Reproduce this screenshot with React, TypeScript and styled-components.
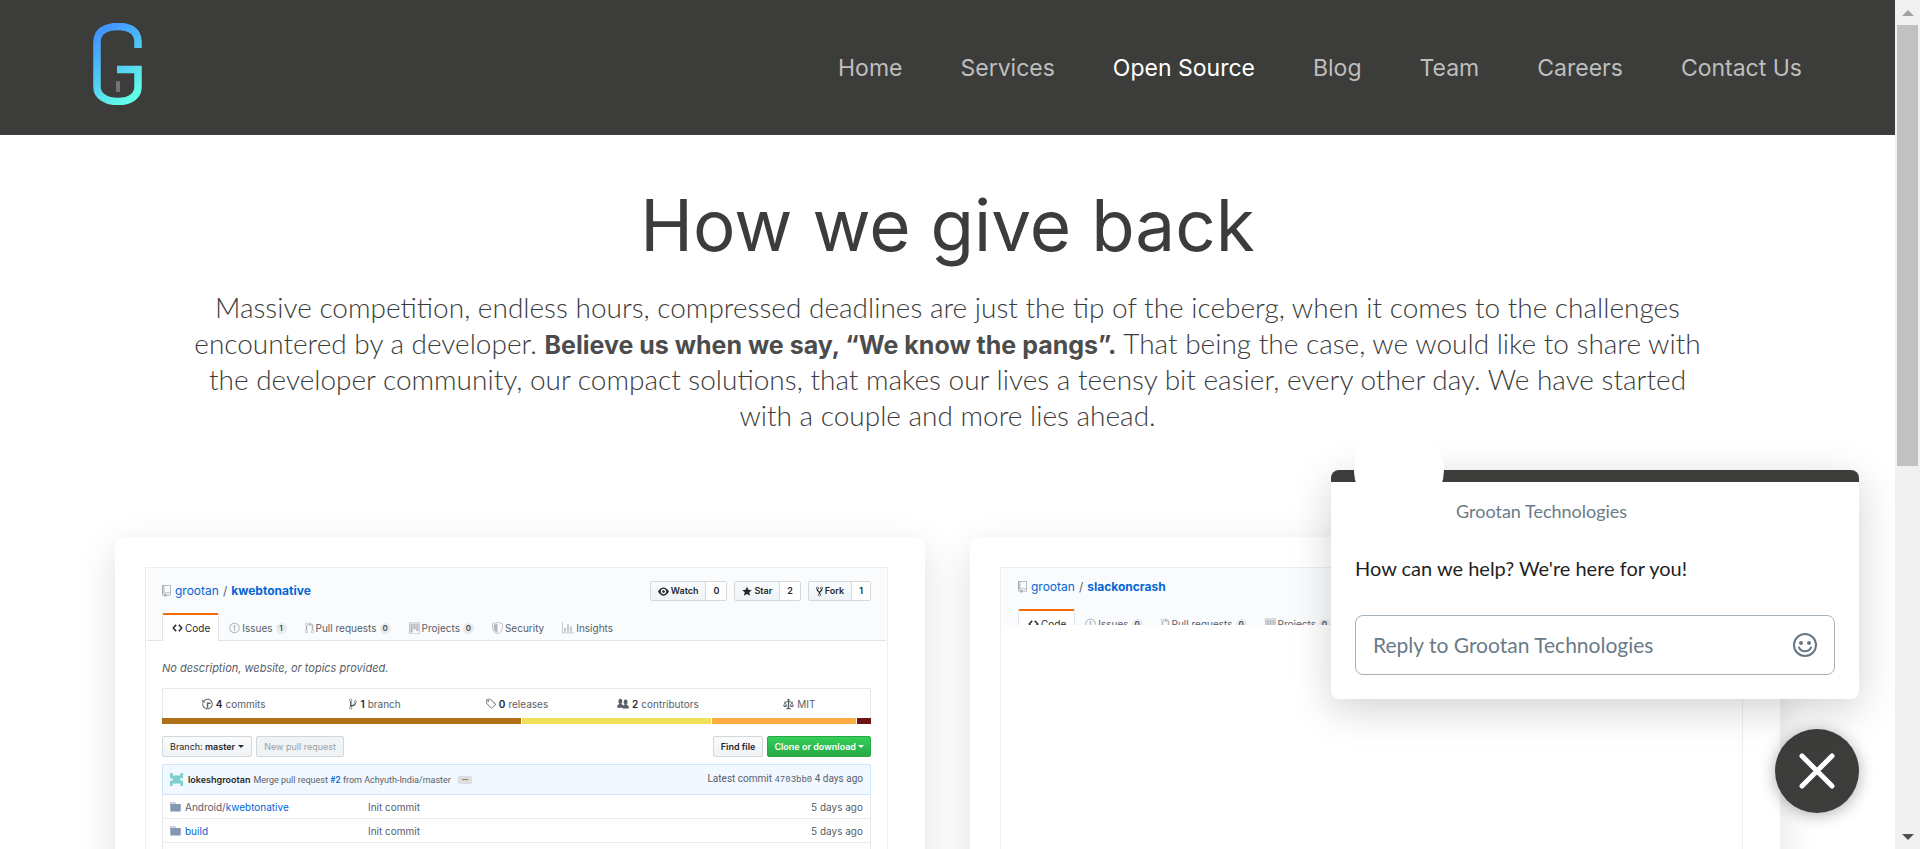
import React from "react";
import styled, { createGlobalStyle, css } from "styled-components";

const GlobalStyle = createGlobalStyle`
  *, *::before, *::after { box-sizing: border-box; }
  body { margin: 0; background: #fff; }
  button, input { font: inherit; margin: 0; }
  a { color: inherit; text-decoration: none; }
`;

const UI = `Inter, "Open Sans", sans-serif`;
const dark = "#3c3c3a";
const link = "#0366d6";
const muted = "#586069";

/* ---------- Page frame ---------- */

const Frame = styled.div`
  display: flex;
  height: 100vh;
  overflow: hidden;
  font-family: ${UI};
`;

const Page = styled.div`
  position: relative;
  flex: 1;
  min-width: 0;
  overflow: hidden;
`;

const Track = styled.div`
  display: flex;
  flex-direction: column;
  align-items: center;
  width: 25px;
  padding: 0 2px;
  background: #f1f1f1;
`;

const Thumb = styled.div`
  width: 100%;
  flex: 0 0 52%;
  background: #c1c1c1;
`;

const TrackArrow = styled.div<{ $down?: boolean }>`
  display: flex;
  align-items: center;
  justify-content: center;
  height: 25px;
  margin-top: ${(p) => (p.$down ? "auto" : 0)};
  &::before {
    content: "";
    border: 6px solid transparent;
    border-width: ${(p) => (p.$down ? "6px 6px 0" : "0 6px 6px")};
    border-${(p) => (p.$down ? "top" : "bottom")}-color: ${(p) => (p.$down ? "#505050" : "#a3a3a3")};
  }
`;

/* ---------- Site header ---------- */

const Header = styled.header`
  display: flex;
  align-items: center;
  justify-content: space-between;
  height: 135px;
  padding: 0 93px;
  background: ${dark};
`;

const LogoLink = styled.a`
  display: block;
  margin-bottom: 7px;
  svg { display: block; }
`;

const Nav = styled.nav`
  display: flex;
  gap: 58px;
`;

const NavLink = styled.a<{ $active?: boolean }>`
  color: ${(p) => (p.$active ? "#fff" : "#bebebd")};
  font-size: 23px;
  line-height: 32px;
`;

/* ---------- Intro ---------- */

const Intro = styled.section`
  padding: 54px 100px 0;
  text-align: center;
`;

const Title = styled.h1`
  margin: 0 0 28px;
  color: ${dark};
  font-size: 71px;
  font-weight: 400;
  line-height: 72px;
`;

const Lead = styled.p`
  margin: 0;
  color: #3c3c3c;
  font: 300 28px/36px Lato, sans-serif;
  strong {
    color: #4c4c4c;
    font: 700 25px/1 ${UI};
  }
`;

/* ---------- Cards ---------- */

const Cards = styled.main`
  display: grid;
  grid-template-columns: 1fr 1fr;
  gap: 45px;
  padding: 104px 115px 0;
`;

const Card = styled.article`
  min-height: 600px;
  padding: 30px 37px 30px 30px;
  border-radius: 8px;
  background: #fff;
  box-shadow: 0 12px 38px rgba(0, 0, 0, 0.13);
`;

const Repo = styled.div`
  min-height: 540px;
  padding: 0 1px;
  border: 1px solid #eeeeef;
  color: ${muted};
  font-size: 10px;
  line-height: 14px;
`;

const RepoHead = styled.div<{ $cropped?: boolean }>`
  background: #fafbfc;
  ${(p) =>
    p.$cropped
      ? css`
          height: 57px;
          overflow: hidden;
          padding: 8px 16px 0;
        `
      : css`
          padding: 12px 15px 0;
          border-bottom: 1px solid #e1e4e8;
        `}
`;

const RepoTop = styled.div`
  display: flex;
  align-items: center;
  justify-content: space-between;
  height: 22px;
`;

const RepoName = styled.div`
  display: flex;
  align-items: center;
  gap: 4px;
  font-size: 12px;
  line-height: 16px;
  svg { color: #a3a8ad; }
  a { color: ${link}; }
  strong { font-weight: 700; }
`;

const Actions = styled.div`
  display: flex;
  gap: 7px;
`;

const ActionGroup = styled.div`
  display: flex;
  height: 20px;
  border: 1px solid #d5d8da;
  border-radius: 2px;
  overflow: hidden;
  color: #24292e;
  font-size: 9px;
  font-weight: 600;
`;

const ActionButton = styled.button`
  display: flex;
  align-items: center;
  gap: 2px;
  padding: 0 7px;
  border: 0;
  border-right: 1px solid #d5d8da;
  background: linear-gradient(#fafbfc, #eff3f6);
  color: inherit;
`;

const ActionCount = styled.a`
  display: flex;
  align-items: center;
  padding: 0 7px;
  background: #fff;
`;

const Tabs = styled.nav`
  display: flex;
  align-items: stretch;
  height: 28px;
  margin: 11px 0 -1px;
`;

const Tab = styled.a<{ $active?: boolean }>`
  display: flex;
  align-items: center;
  gap: 2px;
  padding: 2px 8px 0 10px;
  color: ${(p) => (p.$active ? "#24292e" : muted)};
  svg { color: ${(p) => (p.$active ? "#24292e" : "#b4b8bc")}; }
  ${(p) =>
    p.$active &&
    css`
      padding: 0 8px 0 9px;
      border: 1px solid #e1e4e8;
      border-top: 2px solid #f66a0a;
      border-bottom: 0;
      border-radius: 2px 2px 0 0;
      background: #fff;
    `}
`;

const Badge = styled.span`
  min-width: 11px;
  margin-left: 1px;
  border-radius: 6px;
  background: #e8eaec;
  color: #444d56;
  font-size: 8px;
  font-weight: 600;
  line-height: 11px;
  text-align: center;
`;

const RepoBody = styled.div`
  padding: 19px 15px 0;
`;

const Description = styled.p`
  margin: 0 0 12px;
  font-size: 11px;
  font-style: italic;
  line-height: 16px;
`;

const Summary = styled.div`
  margin-bottom: 12px;
  border: 1px solid #e6e8eb;
  border-bottom: 0;
  border-radius: 2px 2px 0 0;
`;

const Stats = styled.div`
  display: grid;
  grid-template-columns: repeat(5, 1fr);
  height: 29px;
`;

const Stat = styled.a`
  display: flex;
  align-items: center;
  justify-content: center;
  gap: 3px;
  strong { color: #24292e; font-weight: 600; }
`;

const Languages = styled.div`
  display: flex;
  gap: 1px;
  height: 6px;
  margin: 0 -1px;
`;

const Language = styled.span<{ $share: number; $color: string }>`
  flex: ${(p) => p.$share} 0 0;
  background: ${(p) => p.$color};
`;

const Toolbar = styled.div`
  display: flex;
  gap: 4px;
  height: 21px;
  margin-bottom: 7px;
`;

const ToolButton = styled.button<{ $kind?: "disabled" | "primary"; $push?: boolean }>`
  display: flex;
  align-items: center;
  gap: 3px;
  margin-left: ${(p) => (p.$push ? "auto" : 0)};
  padding: 0 7px;
  border: 1px solid #d3d7da;
  border-radius: 2px;
  background: linear-gradient(#fafbfc, #eff3f6);
  color: #24292e;
  font-size: 9px;
  font-weight: 600;
  white-space: nowrap;
  span { font-weight: 400; }
  ${(p) =>
    p.$kind === "disabled" &&
    css`
      background: #eff3f6;
      color: #9aa0a6;
      font-weight: 400;
    `}
  ${(p) =>
    p.$kind === "primary" &&
    css`
      gap: 2px;
      padding: 0 6px;
      border-color: #28a745;
      background: linear-gradient(#34d058, #28a745);
      color: #fff;
    `}
`;

const Caret = styled.i`
  border: 3px solid transparent;
  border-top-color: currentColor;
  border-bottom: 0;
`;

const CommitBar = styled.div`
  display: flex;
  align-items: center;
  gap: 3px;
  height: 31px;
  padding: 0 7px;
  border: 1px solid #cfe5ff;
  border-radius: 2px 2px 0 0;
  background: #f1f8ff;
  font-family: Roboto, sans-serif;
  font-size: 9px;
  strong {
    margin-left: 2px;
    color: #24292e;
    font-family: ${UI};
    font-weight: 600;
  }
  a { color: ${link}; font-weight: 500; }
`;

const More = styled.button`
  height: 8px;
  margin-left: 4px;
  padding: 0 4px;
  border: 0;
  border-radius: 1px;
  background: #dce0e5;
  color: #24292e;
  font-size: 6px;
  line-height: 8px;
`;

const Latest = styled.span`
  margin-left: auto;
  font-size: 10px;
  code { font-family: "Liberation Mono", monospace; font-size: 9px; }
`;

const FileList = styled.div`
  min-height: 240px;
  border: 1px solid #e6e8eb;
  border-top: 0;
`;

const Files = styled.table`
  width: 100%;
  border-collapse: separate;
  border-spacing: 0;
  table-layout: fixed;
  td {
    height: 24px;
    padding: 0 7px;
    border-bottom: 1px solid #eaecef;
  }
  td:first-child { width: 198px; }
  td:last-child { width: 90px; text-align: right; }
`;

const FileName = styled.span`
  display: flex;
  align-items: center;
  gap: 4px;
  svg { color: #8297b3; }
  a { color: ${link}; }
`;

const FilePrefix = styled.span`
  color: ${muted};
`;

/* ---------- Chat ---------- */

const ChatDock = styled.aside`
  position: absolute;
  right: 36px;
  bottom: 36px;
  display: flex;
  flex-direction: column;
  align-items: flex-end;
  gap: 30px;
  font-family: Lato, sans-serif;
`;

const ChatPanel = styled.section`
  position: relative;
  width: 528px;
  padding: 0 24px 24px;
  border-top: 12px solid ${dark};
  border-radius: 8px;
  background: #fff;
  box-shadow: 0 10px 40px rgba(0, 0, 0, 0.18);
`;

const Avatar = styled.span`
  position: absolute;
  top: -57px;
  left: 23px;
  width: 90px;
  height: 90px;
  border-radius: 50%;
  background: #fff;
`;

const ChatSender = styled.p`
  margin: 0;
  padding: 17px 0 0 101px;
  color: #6a7b87;
  font-size: 18px;
  line-height: 24px;
`;

const ChatMessage = styled.p`
  margin: 30px 0 32px;
  color: #1f1f1f;
  font-size: 20px;
  line-height: 30px;
`;

const Reply = styled.form`
  display: flex;
  align-items: center;
  height: 60px;
  padding: 0 17px;
  border: 1px solid #a6b3bd;
  border-radius: 8px;
`;

const ReplyInput = styled.input`
  flex: 1;
  min-width: 0;
  padding: 0;
  border: 0;
  outline: 0;
  background: none;
  color: #1f1f1f;
  font-size: 21px;
  line-height: 30px;
  &::placeholder { color: #6a7b87; opacity: 1; }
`;

const IconButton = styled.button`
  display: flex;
  padding: 0;
  border: 0;
  background: none;
  color: #657784;
`;

const CloseButton = styled.button`
  display: flex;
  align-items: center;
  justify-content: center;
  width: 84px;
  height: 84px;
  padding: 0;
  border: 0;
  border-radius: 50%;
  background: ${dark};
  color: #fff;
  box-shadow: 0 2px 16px rgba(0, 0, 0, 0.32);
`;

/* ---------- Icons ---------- */

const paths = {
  repo: [12, "M4 9H3V8h1v1zm0-3H3v1h1V6zm0-2H3v1h1V4zm0-2H3v1h1V2zm8-1v12c0 .55-.45 1-1 1H6v2l-1.5-1.5L3 16v-2H1c-.55 0-1-.45-1-1V1c0-.55.45-1 1-1h10c.55 0 1 .45 1 1zm-1 10H1v2h2v-1h3v1h5v-2zm0-10H2v9h9V1z"],
  eye: [16, "M8.06 2C3 2 0 8 0 8s3 6 8.06 6C13 14 16 8 16 8s-3-6-7.94-6zM8 12c-2.2 0-4-1.78-4-4 0-2.2 1.8-4 4-4 2.22 0 4 1.8 4 4 0 2.22-1.78 4-4 4zm2-4c0 1.11-.89 2-2 2-1.11 0-2-.89-2-2 0-1.11.89-2 2-2 1.11 0 2 .89 2 2z"],
  star: [14, "M14 6l-4.9-.64L7 1 4.9 5.36 0 6l3.6 3.26L2.67 14 7 11.67 11.33 14l-.93-4.74L14 6z"],
  fork: [10, "M8 1a1.993 1.993 0 00-1 3.72V6L5 8 3 6V4.72A1.993 1.993 0 002 1a1.993 1.993 0 00-1 3.72V6.5l3 3v1.78A1.993 1.993 0 005 15a1.993 1.993 0 001-3.72V9.5l3-3V4.72A1.993 1.993 0 008 1zM2 4.2C1.34 4.2.8 3.65.8 3c0-.65.55-1.2 1.2-1.2.65 0 1.2.55 1.2 1.2 0 .65-.55 1.2-1.2 1.2zm3 10c-.66 0-1.2-.55-1.2-1.2 0-.65.55-1.2 1.2-1.2.65 0 1.2.55 1.2 1.2 0 .65-.55 1.2-1.2 1.2zm3-10c-.66 0-1.2-.55-1.2-1.2 0-.65.55-1.2 1.2-1.2.65 0 1.2.55 1.2 1.2 0 .65-.55 1.2-1.2 1.2z"],
  code: [14, "M9.5 3L8 4.5 11.5 8 8 11.5 9.5 13 14 8 9.5 3zm-5 0L0 8l4.5 5L6 11.5 2.5 8 6 4.5 4.5 3z"],
  issue: [14, "M7 2.3c3.14 0 5.7 2.56 5.7 5.7s-2.56 5.7-5.7 5.7A5.71 5.71 0 011.3 8c0-3.14 2.56-5.7 5.7-5.7zM7 1C3.14 1 0 4.14 0 8s3.14 7 7 7 7-3.14 7-7-3.14-7-7-7zm1 3H6v5h2V4zm0 6H6v2h2v-2z"],
  pull: [12, "M11 11.28V5c-.03-.78-.34-1.47-.94-2.06C9.46 2.35 8.78 2.03 8 2H7V0L4 3l3 3V4h1c.27.02.48.11.69.31.21.2.3.42.31.69v6.28A1.993 1.993 0 0010 15a1.993 1.993 0 001-3.72zm-1 2.92c-.66 0-1.2-.55-1.2-1.2 0-.65.55-1.2 1.2-1.2.65 0 1.2.55 1.2 1.2 0 .65-.55 1.2-1.2 1.2zM4 3c0-1.11-.89-2-2-2a1.993 1.993 0 00-1 3.72v6.56A1.993 1.993 0 002 15a1.993 1.993 0 001-3.72V4.72c.59-.34 1-.98 1-1.72zm-.8 10c0 .66-.55 1.2-1.2 1.2-.65 0-1.2-.55-1.2-1.2 0-.65.55-1.2 1.2-1.2.65 0 1.2.55 1.2 1.2zM2 4.2C1.34 4.2.8 3.65.8 3c0-.65.55-1.2 1.2-1.2.65 0 1.2.55 1.2 1.2 0 .65-.55 1.2-1.2 1.2z"],
  project: [15, "M10 12h3V2h-3v10zm-4-2h3V2H6v8zm-4 4h3V2H2v12zm-1 1h13V1H1v14zM14 0H1a1 1 0 00-1 1v14a1 1 0 001 1h13a1 1 0 001-1V1a1 1 0 00-1-1z"],
  shield: [14, "M0 2l7-2 7 2v6.02C14 12.69 8.69 16 7 16c-1.69 0-7-3.31-7-7.98V2zm1 .75L7 1l6 1.75v5.268C13 12.104 8.449 15 7 15c-1.449 0-6-2.896-6-6.982V2.75zm1 .75L7 2v12c-1.207 0-5-2.482-5-5.985V3.5z"],
  graph: [16, "M16 14v1H0V0h1v14h15zM5 13H3V8h2v5zm4 0H7V3h2v10zm4 0h-2V6h2v7z"],
  history: [14, "M8 13H6V6h5v2H8v5zM7 1C4.81 1 2.87 2.02 1.59 3.59L0 2v4h4L2.5 4.5C3.55 3.17 5.17 2.3 7 2.3c3.14 0 5.7 2.56 5.7 5.7s-2.56 5.7-5.7 5.7A5.71 5.71 0 011.3 8c0-.34.03-.67.09-1H.08C.03 7.33 0 7.66 0 8c0 3.86 3.14 7 7 7s7-3.14 7-7-3.14-7-7-7z"],
  branch: [10, "M10 5c0-1.11-.89-2-2-2a1.993 1.993 0 00-1 3.72v.3c-.02.52-.23.98-.63 1.38-.4.4-.86.61-1.38.63-.83.02-1.48.16-2 .45V4.72a1.993 1.993 0 00-1-3.72C.88 1 0 1.89 0 3a2 2 0 001 1.72v6.56c-.59.35-1 .99-1 1.72 0 1.11.89 2 2 2 1.11 0 2-.89 2-2 0-.53-.2-1-.53-1.36.09-.06.48-.41.59-.47.25-.11.56-.17.94-.17 1.05-.05 1.95-.45 2.75-1.25S8.95 7.77 9 6.73h-.02C9.59 6.37 10 5.73 10 5zM2 1.8c.66 0 1.2.55 1.2 1.2 0 .65-.55 1.2-1.2 1.2C1.35 4.2.8 3.65.8 3c0-.65.55-1.2 1.2-1.2zm0 12.41c-.66 0-1.2-.55-1.2-1.2 0-.65.55-1.2 1.2-1.2.65 0 1.2.55 1.2 1.2 0 .65-.55 1.2-1.2 1.2zm6-8c-.66 0-1.2-.55-1.2-1.2 0-.65.55-1.2 1.2-1.2.65 0 1.2.55 1.2 1.2 0 .65-.55 1.2-1.2 1.2z"],
  tag: [14, "M7.73 1.73C7.26 1.26 6.62 1 5.96 1H3.5C2.13 1 1 2.13 1 3.5v2.47c0 .66.27 1.3.73 1.77l6.06 6.06c.39.39 1.02.39 1.41 0l4.59-4.59a.996.996 0 000-1.41L7.73 1.73zM2.38 7.09c-.31-.3-.47-.7-.47-1.13V3.5c0-.88.72-1.59 1.59-1.59h2.47c.42 0 .83.16 1.13.47l6.14 6.13-4.73 4.73-6.13-6.15zM3.01 3h2v2H3V3h.01z"],
  people: [16, "M16 12.999c0 .439-.45 1-1 1H7.995c-.539 0-.994-.447-.995-.999H1c-.54 0-1-.561-1-1 0-2.634 3-4 3-4s.229-.409 0-1c-.841-.621-1.058-.59-1-3 .058-2.419 1.367-3 2.5-3s2.442.58 2.5 3c.058 2.41-.159 2.379-1 3-.229.59 0 1 0 1s1.549.711 2.42 2.088C9.196 9.369 10 8.999 10 8.999s.229-.409 0-1c-.841-.62-1.058-.59-1-3 .058-2.419 1.367-3 2.5-3s2.437.581 2.495 3c.059 2.41-.158 2.38-1 3-.229.59 0 1 0 1s3.005 1.366 3.005 4z"],
  law: [14, "M7 4c-.83 0-1.5-.67-1.5-1.5S6.17 1 7 1s1.5.67 1.5 1.5S7.83 4 7 4zm7 6c0 1.11-.89 2-2 2h-1c-1.11 0-2-.89-2-2l2-4h-1c-.55 0-1-.45-1-1H8v8c.42 0 1 .45 1 1h1c.42 0 1 .45 1 1H3c0-.55.58-1 1-1h1c0-.55.58-1 1-1h.03L6 5H5c0 .55-.45 1-1 1H3l2 4c0 1.11-.89 2-2 2H2c-1.11 0-2-.89-2-2l2-4H1V5h3c0-.55.45-1 1-1h4c.55 0 1 .45 1 1h3v1h-1l2 4zM2.5 7L1 10h3L2.5 7zM13 10l-1.5-3-1.5 3h3z"],
  folder: [14, "M13 4H7V3c0-.66-.31-1-1-1H1c-.55 0-1 .45-1 1v10c0 .55.45 1 1 1h12c.55 0 1-.45 1-1V5c0-.55-.45-1-1-1zM6 4H1V3h5v1z"],
} as const;

type IconName = keyof typeof paths;

function Icon({ name, size = 12 }: { name: IconName; size?: number }) {
  const [w, d] = paths[name];
  return (
    <svg width={Math.round((w * size) / 16)} height={size} viewBox={`0 0 ${w} 16`} fill="currentColor" aria-hidden="true">
      <path fillRule="evenodd" d={d} />
    </svg>
  );
}

function Logo() {
  return (
    <svg width="49" height="82" viewBox="0 0 49 82" fill="none" aria-hidden="true">
      <defs>
        <linearGradient id="g" gradientUnits="userSpaceOnUse" x1="4" y1="12" x2="46" y2="70">
          <stop offset="0" stopColor="#4296ff" />
          <stop offset="1" stopColor="#62ffe8" />
        </linearGradient>
      </defs>
      <path d="M45 25V19C45 8 37 3.500 25 3.500S4 8 4 19V64C4 73 13 78.500 25 78.500S45 73 45 64V46.500H24" stroke="url(#g)" strokeWidth="7.500" />
      <rect x="23" y="58" width="4" height="11" rx="1" fill="#747474" />
    </svg>
  );
}

/* ---------- Sections ---------- */

const navItems = ["Home", "Services", "Open Source", "Blog", "Team", "Careers", "Contact Us"];

const languages: [string, number, string][] = [
  ["Java", 359, "#b07219"],
  ["JavaScript", 190, "#f1e05a"],
  ["Swift", 144, "#ffac45"],
  ["Ruby", 14, "#701516"],
];

const stats: [IconName, string, string][] = [
  ["history", "4", "commits"],
  ["branch", "1", "branch"],
  ["tag", "0", "releases"],
  ["people", "2", "contributors"],
  ["law", "", "MIT"],
];

const actions: [IconName, string, string][] = [
  ["eye", "Watch", "0"],
  ["star", "Star", "2"],
  ["fork", "Fork", "1"],
];

const files: [string, string][] = [
  ["Android/", "kwebtonative"],
  ["", "build"],
];

function RepoHeader({ name, issues, cropped }: { name: string; issues: string; cropped?: boolean }) {
  const tabs: [IconName, string, string?][] = [
    ["issue", "Issues", issues],
    ["pull", "Pull requests", "0"],
    ["project", "Projects", "0"],
    ["shield", "Security"],
    ["graph", "Insights"],
  ];
  return (
    <RepoHead $cropped={cropped}>
      <RepoTop>
        <RepoName>
          <Icon name="repo" />
          <a href="#owner">grootan</a>
          <span>/</span>
          <a href="#repo">
            <strong>{name}</strong>
          </a>
        </RepoName>
        {!cropped && (
          <Actions>
            {actions.map(([icon, label, count]) => (
              <ActionGroup key={label}>
                <ActionButton type="button">
                  <Icon name={icon} size={11} />
                  {label}
                </ActionButton>
                <ActionCount href="#count">{count}</ActionCount>
              </ActionGroup>
            ))}
          </Actions>
        )}
      </RepoTop>
      <Tabs>
        <Tab href="#code" $active>
          <Icon name="code" />
          Code
        </Tab>
        {tabs.map(([icon, label, count]) => (
          <Tab key={label} href="#tab">
            <Icon name={icon} />
            {label}
            {count && <Badge>{count}</Badge>}
          </Tab>
        ))}
      </Tabs>
    </RepoHead>
  );
}

function RepoContents() {
  return (
    <RepoBody>
      <Description>No description, website, or topics provided.</Description>
      <Summary>
        <Stats>
          {stats.map(([icon, count, label]) => (
            <Stat key={label} href="#stat">
              <Icon name={icon} />
              {count && <strong>{count}</strong>}
              {label}
            </Stat>
          ))}
        </Stats>
        <Languages>
          {languages.map(([name, share, color]) => (
            <Language key={name} $share={share} $color={color} />
          ))}
        </Languages>
      </Summary>
      <Toolbar>
        <ToolButton type="button">
          <div>
            <span>Branch:</span> master
          </div>
          <Caret />
        </ToolButton>
        <ToolButton type="button" $kind="disabled">
          New pull request
        </ToolButton>
        <ToolButton type="button" $push>
          Find file
        </ToolButton>
        <ToolButton type="button" $kind="primary">
          Clone or download
          <Caret />
        </ToolButton>
      </Toolbar>
      <CommitBar>
        <svg width="13" height="13" viewBox="0 0 5 5" fill="#7fcdcd" aria-hidden="true">
          <path d="M0 0h1v1h3V0h1v2H4v1h1v2H4V4H1v1H0V3h1V2H0z" />
        </svg>
        <strong>lokeshgrootan</strong>
        <span>
          Merge pull request <a href="#pr">#2</a> from Achyuth-India/master
        </span>
        <More type="button" aria-label="Show more">•••</More>
        <Latest>
          Latest commit <code>4703bb0</code> 4 days ago
        </Latest>
      </CommitBar>
      <FileList>
        <Files>
          <tbody>
            {files.map(([prefix, name]) => (
              <tr key={name}>
                <td>
                  <FileName>
                    <Icon name="folder" />
                    <a href="#file">
                      <FilePrefix>{prefix}</FilePrefix>
                      {name}
                    </a>
                  </FileName>
                </td>
                <td>Init commit</td>
                <td>5 days ago</td>
              </tr>
            ))}
          </tbody>
        </Files>
      </FileList>
    </RepoBody>
  );
}

function Chat() {
  return (
    <ChatDock>
      <ChatPanel>
        <Avatar />
        <ChatSender>Grootan Technologies</ChatSender>
        <ChatMessage>How can we help? We're here for you!</ChatMessage>
        <Reply>
          <ReplyInput aria-label="Reply" placeholder="Reply to Grootan Technologies" />
          <IconButton type="button" aria-label="Emoji">
            <svg width="24" height="24" viewBox="0 0 24 24" fill="none" stroke="currentColor" strokeWidth="2" strokeLinecap="round">
              <circle cx="12" cy="12" r="11" />
              <path d="M6 14.500c2.500 5 9.500 5 12 0" />
              <circle cx="8" cy="10" r="1" fill="currentColor" />
              <circle cx="16" cy="10" r="1" fill="currentColor" />
            </svg>
          </IconButton>
        </Reply>
      </ChatPanel>
      <CloseButton type="button" aria-label="Close chat">
        <svg width="36" height="36" viewBox="0 0 36 36" stroke="currentColor" strokeWidth="5" strokeLinecap="round">
          <path d="M3 3l30 30M33 3L3 33" />
        </svg>
      </CloseButton>
    </ChatDock>
  );
}

export default function App() {
  return (
    <Frame>
      <GlobalStyle />
      <Page>
        <Header>
          <LogoLink href="#home" aria-label="Grootan">
            <Logo />
          </LogoLink>
          <Nav>
            {navItems.map((item) => (
              <NavLink key={item} href="#nav" $active={item === "Open Source"}>
                {item}
              </NavLink>
            ))}
          </Nav>
        </Header>
        <Intro>
          <Title>How we give back</Title>
          <Lead>
            Massive competition, endless hours, compressed deadlines are just the tip of the iceberg, when it comes to the challenges
            <br />
            encountered by a developer. <strong>Believe us when we say, “We know the pangs”.</strong> That being the case, we would like to share with
            <br />
            the developer community, our compact solutions, that makes our lives a teensy bit easier, every other day. We have started
            <br />
            with a couple and more lies ahead.
          </Lead>
        </Intro>
        <Cards>
          <Card>
            <Repo>
              <RepoHeader name="kwebtonative" issues="1" />
              <RepoContents />
            </Repo>
          </Card>
          <Card>
            <Repo>
              <RepoHeader name="slackoncrash" issues="0" cropped />
            </Repo>
          </Card>
        </Cards>
        <Chat />
      </Page>
      <Track aria-hidden="true">
        <TrackArrow />
        <Thumb />
        <TrackArrow $down />
      </Track>
    </Frame>
  );
}
